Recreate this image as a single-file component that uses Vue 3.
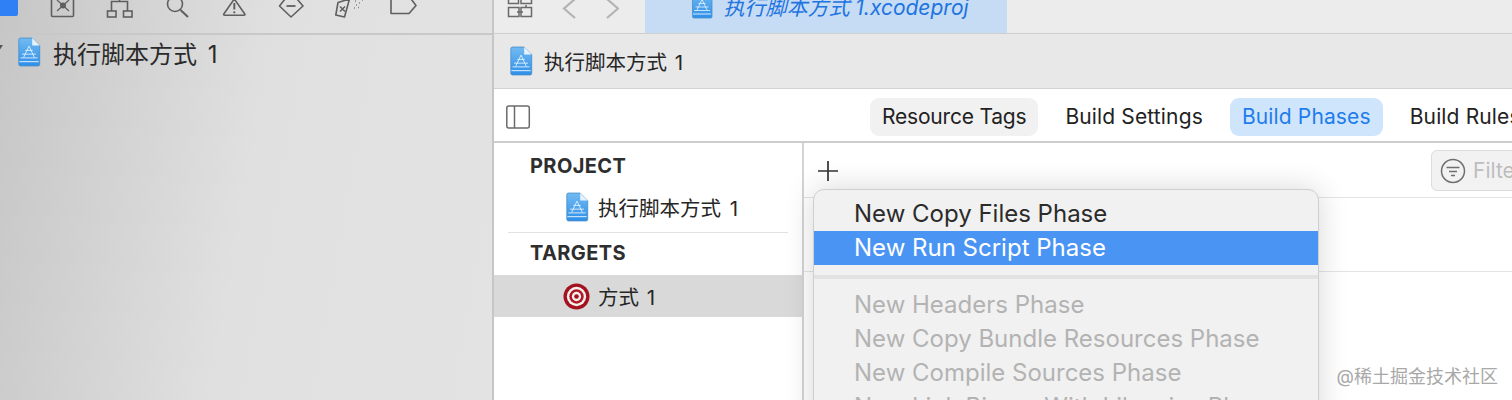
<script setup>
const tools = [
  { k: 'inspect', w: 26 }, { k: 'tree', w: 27 }, { k: 'search', w: 25 }, { k: 'warn', w: 26 },
  { k: 'diamond', w: 26 }, { k: 'spray', w: 28 }, { k: 'tag', w: 30 }, { k: 'list', w: 22 }
]
const tabs = [
  { label: 'Resource Tags', cls: 'grey' },
  { label: 'Build Settings', cls: '' },
  { label: 'Build Phases', cls: 'active' },
  { label: 'Build Rules', cls: '' }
]
const enabled = ['New Copy Files Phase', 'New Run Script Phase']
const disabled = ['New Headers Phase', 'New Copy Bundle Resources Phase', 'New Compile Sources Phase', 'New Link Binary With Libraries Phase']
</script>

<template>
  <div class="page">
    <svg class="defs" aria-hidden="true">
      <defs>
        <linearGradient id="docfill" x1="0" y1="0" x2="0" y2="1">
          <stop offset="0" stop-color="#72bbf2" />
          <stop offset="1" stop-color="#2f8fe8" />
        </linearGradient>
        <symbol id="proj" viewBox="0 0 22 28">
          <path d="M1.500 2.500a1.500 1.500 0 0 1 1.500-1.500h11l7 7v17.500a1.500 1.500 0 0 1-1.500 1.500h-16.500a1.500 1.500 0 0 1-1.500-1.500z" fill="url(#docfill)" stroke="#4a8fc9" stroke-width=".8" />
          <path d="M14 1l7 7h-7z" fill="#e6f2fb" />
          <path d="M11 8.500l-5 10.500M11 8.500l5 10.500M4.500 16h13M7.500 12.500h7M3 19.500h16" fill="none" stroke="#e4f3ff" stroke-width=".9" stroke-opacity=".9" />
          <path d="M2 23h18" stroke="#d5ebfc" stroke-width="1" />
        </symbol>
      </defs>
    </svg>

    <aside class="left">
      <div class="toolbar">
        <span class="nav-blue"></span>
        <div class="tools">
          <svg v-for="t in tools" :key="t.k" class="tool" :class="t.k" :width="t.w" height="26" :viewBox="`0 0 ${t.w} 26`" fill="none" stroke="#5f5f5f" stroke-width="1.600">
            <template v-if="t.k === 'inspect'">
              <path d="M2.500 -1v16.500a1 1 0 0 0 1 1h20a1 1 0 0 0 1-1v-16.500" />
              <path d="M8 0l12 11M20 0l-12 11" stroke-width="1.200" />
              <circle cx="14" cy="5.500" r="3" fill="#5f5f5f" stroke="none" />
            </template>
            <template v-else-if="t.k === 'tree'">
              <path d="M13.500 -1v2M5.500 11V1.500h16V11" />
              <rect x="1.500" y="11" width="8.500" height="6" />
              <rect x="17.500" y="11" width="8.500" height="6" />
            </template>
            <template v-else-if="t.k === 'search'">
              <circle cx="10" cy="4" r="7.500" />
              <path d="M15.500 10l7.500 7" stroke-width="2" />
            </template>
            <template v-else-if="t.k === 'warn'">
              <path d="M13.300 -1L2.800 14a.8.8 0 0 0 .7 1.200h19.600a.8.8 0 0 0 .7-1.200z" stroke-linejoin="round" />
              <path d="M13.300 3v6.500" stroke-width="2" />
              <circle cx="13.300" cy="12.300" r="1.100" fill="#5f5f5f" stroke="none" />
            </template>
            <template v-else-if="t.k === 'diamond'">
              <path d="M7 -1L1.500 6 13 17 25 6 19 -1" stroke-linejoin="round" />
              <path d="M8.500 6h9" stroke-width="1.800" />
            </template>
            <template v-else-if="t.k === 'spray'">
              <path d="M3 2.500L14.500 -1 9.500 17 .8 15z" stroke-linejoin="round" />
              <path d="M5 6.500l5 5M10 6.500l-5 5" stroke-width="1.500" />
              <path d="M20 1h1M24 3h1M27 0h1M19 8h1M23 7.500h1M21 5h1" stroke-width="1.300" stroke-opacity=".7" />
            </template>
            <template v-else-if="t.k === 'tag'">
              <path d="M2 -2v15.500h18l7-8-6-8" stroke-linejoin="round" />
            </template>
            <template v-else>
              <path d="M2 -1v16.500a1 1 0 0 0 1 1h16a1 1 0 0 0 1-1v-16.500" />
              <path d="M6.500 0h2M11 0h7M6.500 5h2M11 5h7M6.500 11h2M11 11h7" stroke-width="1.300" />
            </template>
          </svg>
        </div>
      </div>
      <div class="tree-row">
        <span class="caret"></span>
        <svg class="tree-icon" width="24" height="30"><use href="#proj" /></svg>
        <span class="tree-text">执行脚本方式 1</span>
      </div>
    </aside>

    <main class="right">
      <div class="tabbar">
        <svg class="grid-icon" width="26" height="18" viewBox="0 0 26 18" fill="none" stroke="#6a6a6a" stroke-width="1.500">
          <path d="M1.500 -1v4.500h10v-4.500M14 -1v4.500h10.500v-4.500" />
          <rect x="1.500" y="7.500" width="10.500" height="9" />
          <rect x="14" y="7.500" width="10.500" height="9" />
          <path d="M10 12h6M19 5v3" />
        </svg>
        <svg class="chev" width="14" height="24" viewBox="0 0 14 24" fill="none" stroke="#b3b3b3" stroke-width="2.200"><path d="M13 2L2 11.500l11 9.500" /></svg>
        <svg class="chev chev2" width="14" height="24" viewBox="0 0 14 24" fill="none" stroke="#b3b3b3" stroke-width="2.200"><path d="M2 2l11 9.500L2 21" /></svg>
        <div class="file-tab">
          <svg width="22" height="28" class="file-icon"><use href="#proj" /></svg>
          <span class="file-name">执行脚本方式 1.xcodeproj</span>
        </div>
      </div>

      <div class="crumb">
        <svg width="24" height="30"><use href="#proj" /></svg>
        <span>执行脚本方式 1</span>
      </div>

      <div class="tabs-row">
        <svg class="panel-icon" width="26" height="26" viewBox="0 0 26 26" fill="none" stroke="#6b6b6b" stroke-width="1.500">
          <rect x="1.800" y="2" width="22.500" height="22" rx="2" />
          <path d="M9.500 2v22" />
        </svg>
        <div class="tabs">
          <span v-for="t in tabs" :key="t.label" class="tab" :class="t.cls">{{ t.label }}</span>
        </div>
      </div>

      <div class="body">
        <section class="list">
          <h3 class="head">PROJECT</h3>
          <div class="item proj-item">
            <svg width="24" height="30"><use href="#proj" /></svg>
            <span>执行脚本方式 1</span>
          </div>
          <div class="rule"></div>
          <h3 class="head">TARGETS</h3>
          <div class="item target">
            <svg width="27" height="27" viewBox="0 0 28 28">
              <circle cx="14" cy="14" r="13.500" fill="#a3131f" />
              <circle cx="14" cy="14" r="10" fill="#f4f0f0" />
              <circle cx="14" cy="14" r="7.500" fill="#b01824" />
              <circle cx="14" cy="14" r="4.800" fill="#f4f0f0" />
              <circle cx="14" cy="14" r="2.400" fill="#a3131f" />
            </svg>
            <span>方式 1</span>
          </div>
        </section>

        <section class="content">
          <div class="actions">
            <svg class="plus" width="22" height="22" viewBox="0 0 22 22" stroke="#333" stroke-width="1.700"><path d="M11 1v20M1 11h20" /></svg>
            <div class="filter">
              <svg width="26" height="26" viewBox="0 0 26 26" fill="none" stroke="#6f6f6f" stroke-width="1.500">
                <circle cx="13" cy="13" r="11.500" />
                <path d="M6.500 9.500h13M9 13.500h8M11 17.500h4" />
              </svg>
              <span>Filter</span>
            </div>
          </div>
          <div class="phase-gap"></div>
        </section>
      </div>

      <div class="menu">
        <div v-for="(m, i) in enabled" :key="m" class="menu-row" :class="{ hot: i === 1 }">{{ m }}</div>
        <div class="menu-sep"></div>
        <div v-for="m in disabled" :key="m" class="menu-row off">{{ m }}</div>
      </div>
      <div class="mark">@稀土掘金技术社区</div>
    </main>
  </div>
</template>

<style>
html, body { margin: 0; overflow: hidden; background: #fff; }
</style>

<style scoped>
.page {
  display: flex;
  width: 1512px;
  height: 400px;
  overflow: hidden;
  font-family: Inter, "Noto Sans CJK SC", sans-serif;
  color: #262626;
}
.defs { position: absolute; width: 0; height: 0; }
svg { display: block; flex: none; }

.left {
  width: 492px;
  flex: none;
  background: linear-gradient(100deg, #c6c6c6 0%, #d3d3d3 25%, #e0e0e0 50%, #e3e3e3 100%);
}
.toolbar {
  height: 33px;
  display: flex;
  border-bottom: 2px solid #c8c8c8;
  overflow: hidden;
}
.nav-blue {
  width: 18px;
  height: 16px;
  background: #2f80f5;
  border-radius: 0 0 2px 0;
  flex: none;
}
.tools {
  display: flex;
  gap: 31px;
  padding-left: 31px;
  align-items: flex-start;
}
.tool.search { margin-left: 1px; }
.tool.tag { margin-left: -5px; }
.tree-row {
  display: flex;
  align-items: center;
  height: 40px;
  margin-top: -3px;
}
.caret {
  width: 0; height: 0;
  margin: -8px 14px 0 -5px;
  border-left: 4px solid transparent;
  border-right: 4px solid transparent;
  border-top: 6px solid #555;
}
.tree-icon { margin-right: 12px; }
.tree-text { font-size: 24px; word-spacing: 4px; white-space: nowrap; color: #2a2a2a; }

.right {
  position: relative;
  flex: 1;
  min-width: 0;
  border-left: 2px solid #c6c6c6;
  display: flex;
  flex-direction: column;
}
.tabbar {
  height: 33px;
  flex: none;
  display: flex;
  background: #ececec;
  border-bottom: 1px solid #cfcfcf;
  overflow: hidden;
}
.grid-icon { margin: 0 0 0 13px; }
.chev { margin: -3px 0 0 29px; }
.file-tab {
  margin-left: 26px;
  width: 362px;
  background: #c6dcf4;
  display: flex;
  justify-content: center;
  gap: 10px;
  padding-left: 8px;
  color: #1e74e0;
  box-sizing: border-box;
}
.file-icon { margin-top: -9px; }
.file-name {
  font-size: 21px;
  font-style: italic;
  line-height: 15px;
  white-space: nowrap;
}
.crumb {
  height: 55px;
  flex: none;
  box-sizing: border-box;
  display: flex;
  align-items: center;
  gap: 11px;
  padding-left: 15px;
  background: #e8e8e8;
  border-bottom: 1px solid #d2d2d2;
  font-size: 20.5px;
  word-spacing: 2px;
}
.tabs-row {
  height: 54px;
  flex: none;
  box-sizing: border-box;
  display: flex;
  align-items: center;
  border-bottom: 2px solid #cdcdcd;
  padding: 4px 0 0 11px;
  overflow: hidden;
}
.tabs {
  display: flex;
  margin-left: 339px;
  gap: 15px;
  flex: none;
}
.tab {
  font-size: 21px;
  height: 38px;
  line-height: 38px;
  padding: 0 12px;
  border-radius: 9px;
  white-space: nowrap;
  color: #222;
  letter-spacing: .14px;
}
.tab.grey { background: #f1f1f1; letter-spacing: -.2px; }
.tab.active { background: #cfe5fb; color: #1f7cec; }

.body { flex: 1; display: flex; min-height: 0; }
.list {
  width: 310px;
  flex: none;
  box-sizing: border-box;
  border-right: 2px solid #d4d4d4;
  padding-top: 9px;
}
.head {
  margin: 0 0 0 36px;
  font-size: 20px;
  font-weight: 700;
  line-height: 28px;
  color: #2e2e2e;
  letter-spacing: .4px;
}
.item {
  display: flex;
  align-items: center;
  gap: 9px;
  font-size: 20.5px;
  word-spacing: 3px;
  white-space: nowrap;
}
.proj-item { height: 44px; padding: 2px 0 0 71px; box-sizing: border-box; margin-top: 4px; }
.rule { height: 1px; margin: 4px 14px 6px 14px; background: #e2e2e2; }
.target {
  height: 42px;
  padding-left: 69px;
  gap: 8px;
  background: #d9d9d9;
  margin-top: 8px;
  word-spacing: 2px;
}
.content { flex: 1; min-width: 0; overflow: hidden; }
.actions {
  height: 55px;
  box-sizing: border-box;
  border-bottom: 1px solid #e4e4e4;
  padding: 7px 0 0 13px;
  display: flex;
  gap: 596px;
}
.plus { margin-top: 10px; }
.filter {
  flex: none;
  width: 120px;
  height: 41px;
  box-sizing: border-box;
  border: 1px solid #dcdcdc;
  border-radius: 6px;
  background: #f2f2f2;
  display: flex;
  align-items: center;
  gap: 7px;
  padding-left: 8px;
  font-size: 21px;
  color: #bdbdbd;
  margin-left: -4px;
}
.phase-gap { height: 73px; border-bottom: 1px solid #e4e4e4; }

.menu {
  position: absolute;
  left: 319px;
  top: 189px;
  width: 506px;
  height: 260px;
  box-sizing: border-box;
  padding-top: 7px;
  background: #f1f1f1;
  border: 1px solid #cfcfcf;
  border-radius: 11px 11px 0 0;
  box-shadow: 0 0 30px rgba(0, 0, 0, .16);
  font-size: 24px;
}
.menu-row {
  height: 34px;
  line-height: 34px;
  padding-left: 40px;
  white-space: nowrap;
  color: #2b2b2b;
}
.menu-row.hot { background: #4a94f4; color: #fff; }
.menu-row.off { color: #b3b3b3; }
.menu-sep { height: 23px; position: relative; }
.menu-sep::after {
  content: '';
  position: absolute;
  left: 0; right: 0; top: 10px;
  height: 4px;
  background: #e2e2e2;
}
.mark {
  position: absolute;
  right: 14px;
  top: 362px;
  font-size: 18px;
  color: #a8a8a8;
  white-space: nowrap;
}
</style>
